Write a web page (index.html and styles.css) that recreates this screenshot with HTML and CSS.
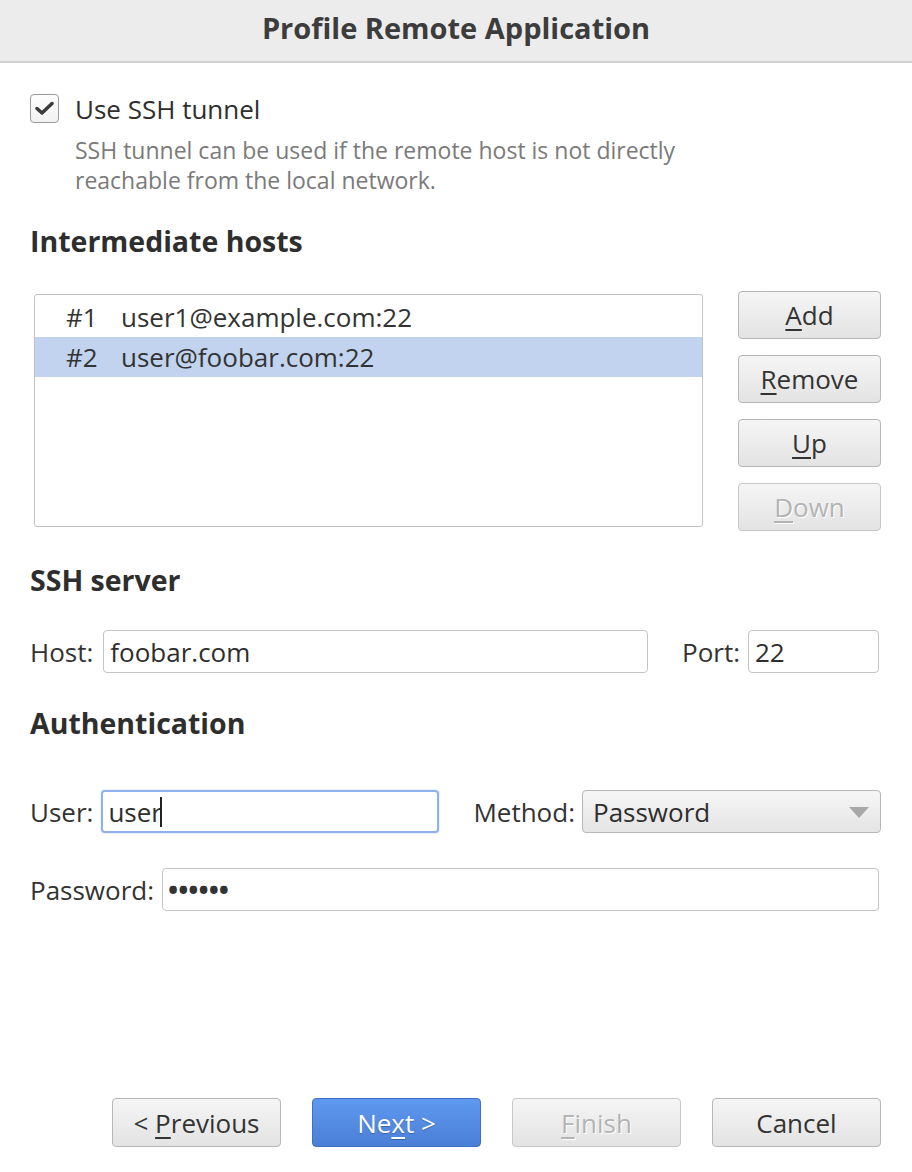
FILE: index.html
```html
<!DOCTYPE html>
<html>
<head>
<meta charset="utf-8">
<link rel="stylesheet" href="styles.css">
</head>
<body>
<div class="window">
  <div class="titlebar">Profile Remote Application</div>
  <div class="content">
    <div class="check-row">
      <span class="checkbox">
        <svg width="19" height="15" viewBox="0 0 19 15"><path d="M2 7.5 L7 12 L17 2.5" fill="none" stroke="#3a3a3a" stroke-width="3.4" stroke-linecap="round" stroke-linejoin="round"/></svg>
      </span>
      <span class="check-label">Use SSH tunnel</span>
    </div>
    <p class="desc">SSH tunnel can be used if the remote host is not directly<br>reachable from the local network.</p>

    <h2 class="heading h-hosts">Intermediate hosts</h2>
    <div class="hosts">
      <div class="list">
        <div class="row"><span class="num">#1</span><span>user1@example.com:22</span></div>
        <div class="row selected"><span class="num">#2</span><span>user@foobar.com:22</span></div>
      </div>
      <div class="side-buttons">
        <button class="btn side"><span><u>A</u>dd</span></button>
        <button class="btn side"><span><u>R</u>emove</span></button>
        <button class="btn side"><span><u>U</u>p</span></button>
        <button class="btn side disabled"><span><u>D</u>own</span></button>
      </div>
    </div>

    <h2 class="heading h-server">SSH server</h2>
    <div class="field-row r-host">
      <label class="lbl">Host:</label>
      <div class="input grow">foobar.com</div>
      <label class="lbl port-lbl">Port:</label>
      <div class="input port">22</div>
    </div>

    <h2 class="heading h-auth">Authentication</h2>
    <div class="field-row r-user">
      <label class="lbl">User:</label>
      <div class="input focus user">user<span class="caret"></span></div>
      <label class="lbl method-lbl">Method:</label>
      <div class="select grow">Password<span class="arrow"></span></div>
    </div>
    <div class="field-row r-pass">
      <label class="lbl">Password:</label>
      <div class="input grow dots">&bull;&bull;&bull;&bull;&bull;&bull;</div>
    </div>
  </div>
  <div class="footer">
    <button class="btn foot"><span>&lt; <u>P</u>revious</span></button>
    <button class="btn foot primary"><span>Ne<u>x</u>t &gt;</span></button>
    <button class="btn foot disabled"><span><u>F</u>inish</span></button>
    <button class="btn foot"><span>Cancel</span></button>
  </div>
</div>
</body>
</html>
```
FILE: styles.css
```css
* { box-sizing: border-box; }
html, body { margin: 0; padding: 0; background: #fff; }
body {
  font-family: "Open Sans", "Noto Sans", sans-serif;
  color: #333;
  font-size: 26px;
}
.window {
  width: 912px;
  height: 1172px;
  display: flex;
  flex-direction: column;
}
.titlebar {
  height: 63px;
  background: #ececec;
  border-bottom: 2px solid #cfcfcf;
  text-align: center;
  font-weight: 700;
  font-size: 29px;
  line-height: 55px;
  color: #3c3c3c;
}
.content {
  padding: 0 31px 0 30px;
}
.check-row {
  display: flex;
  align-items: center;
  margin-top: 31px;
  height: 29px;
}
.checkbox {
  width: 29px;
  height: 29px;
  border: 1.5px solid #9a9a9a;
  border-radius: 4px;
  background: linear-gradient(#fdfdfd, #f1f1f1);
  display: flex;
  align-items: center;
  justify-content: center;
}
.check-label {
  margin-left: 16px;
  color: #2e2e2e;
  line-height: 28px;
}
.desc {
  margin: 12px 0 0 45px;
  font-size: 23px;
  line-height: 30px;
  color: #7a7a7a;
}
.heading {
  margin: 0;
  font-weight: 700;
  font-size: 28.5px;
  line-height: 36px;
  color: #2e2e2e;
}
.h-hosts { margin-top: 28px; }
.hosts {
  display: flex;
  margin-top: 32px;
  gap: 35px;
}
.list {
  margin: 3px 0 0 4px;
  width: 669px;
  height: 233px;
  border: 1px solid #c2c2c2;
  border-radius: 3px;
  padding-top: 2px;
  background: #fff;
}
.row {
  height: 40px;
  display: flex;
  align-items: center;
  color: #333;
  line-height: 38px;
}
.row .num {
  width: 86px;
  padding-left: 31px;
}
.row.selected { background: #c1d3ee; }
.side-buttons {
  display: flex;
  flex-direction: column;
  gap: 16px;
}
.btn {
  font-family: inherit;
  font-size: 26px;
  color: #333;
  background: linear-gradient(#f5f5f5, #e3e3e3);
  border: 1.5px solid #b7b7b7;
  border-radius: 4px;
  padding: 0;
  display: flex;
  align-items: center;
  justify-content: center;
  line-height: 44px;
}
.btn span { white-space: pre; }
.btn u { text-decoration-thickness: 2px; text-underline-offset: 4px; }
.btn.side { width: 143px; height: 48px; }
.btn.disabled {
  color: #b4b4b4;
  text-shadow: 1px 1px 0 #fff;
  border-color: #c8c8c8;
}
.h-server { margin-top: 31px; }
.field-row {
  display: flex;
  align-items: center;
  height: 43px;
}
.r-host { margin-top: 32px; }
.lbl { color: #333; margin-right: 10px; white-space: nowrap; }
.input {
  height: 43px;
  border: 1.5px solid #c4c4c4;
  border-radius: 4px;
  background: #fff;
  padding-left: 6px;
  display: flex;
  align-items: center;
  color: #2e2e2e;
}
.grow { flex: 1; }
.port-lbl { margin-left: 34px; margin-right: 8px; }
.port { width: 131px; flex: none; margin-right: 2px; }
.h-auth { margin-top: 32px; }
.r-user { margin-top: 49px; }
.user {
  width: 338px;
  border: 2px solid #8fb2ee;
  box-shadow: 0 0 2px #b8cff5;
  padding-left: 5px;
}
.r-user .lbl:first-child { margin-right: 8px; }
.caret {
  display: inline-block;
  width: 2px;
  height: 30px;
  background: #222;
  margin-left: -2px;
}
.method-lbl { margin-left: 34px; margin-right: 7px; }
.select {
  height: 43px;
  border: 1.5px solid #b7b7b7;
  border-radius: 4px;
  background: linear-gradient(#f6f6f6, #e4e4e4);
  padding-left: 10px;
  display: flex;
  align-items: center;
  position: relative;
  color: #2e2e2e;
}
.arrow {
  position: absolute;
  right: 11px;
  top: 16px;
  width: 0;
  height: 0;
  border-left: 10px solid transparent;
  border-right: 10px solid transparent;
  border-top: 11px solid #a8a8a8;
}
.r-pass { margin-top: 35px; }
.r-pass .lbl { margin-right: 8px; }
.dots { font-size: 27px; font-weight: 700; letter-spacing: 0; padding-left: 5px; margin-right: 2px; color: #333; }
.footer {
  margin-top: auto;
  display: flex;
  justify-content: flex-end;
  gap: 31px;
  padding: 0 31px 25px 0;
}
.btn.foot { width: 169px; height: 49px; }
.btn.primary {
  color: #fff;
  background: linear-gradient(#5f9af0, #4a7fd6);
  border-color: #3d6fc4;
  text-shadow: 0 1px 1px rgba(0,0,0,0.25);
}
```
